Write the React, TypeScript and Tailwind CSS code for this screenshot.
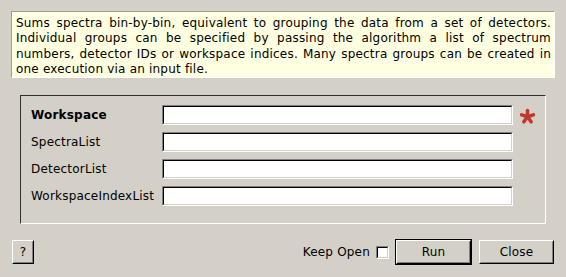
import React from "react";

const font = { fontFamily: '"DejaVu Sans", Verdana, sans-serif' };

function Sunken({ className = "", children }: { className?: string; children?: React.ReactNode }) {
  return (
    <div className={`border border-t-[#808080] border-l-[#808080] border-b-white border-r-white ${className}`}>
      <div className="h-full w-full border border-t-[#000000] border-l-[#000000] border-b-[#d4d0c8] border-r-[#d4d0c8] bg-white">
        {children}
      </div>
    </div>
  );
}

function Button({ label, isDefault = false, className = "" }: { label: string; isDefault?: boolean; className?: string }) {
  const inner = (
    <div className="h-full w-full border border-t-white border-l-white border-b-[#000000] border-r-[#000000]">
      <div className="flex h-full w-full items-center justify-center border border-t-[#d4d0c8] border-l-[#d4d0c8] border-b-[#808080] border-r-[#808080] text-[12px] tracking-[0.2px] text-black">
        {label}
      </div>
    </div>
  );
  if (isDefault) {
    return <div className={`border border-black ${className}`}>{inner}</div>;
  }
  return <div className={className}>{inner}</div>;
}

function Asterisk() {
  const angles = [-90, -18, 54, 126, 198];
  return (
    <svg width="17" height="17" viewBox="0 0 17 17" className="shrink-0">
      {angles.map((a) => {
        const r = (a * Math.PI) / 180;
        return (
          <line
            key={a}
            x1={8.5}
            y1={8.8}
            x2={8.5 + 6.2 * Math.cos(r)}
            y2={8.8 + 6.2 * Math.sin(r)}
            stroke="#c0392b"
            strokeWidth={3.6}
            strokeLinecap="round"
          />
        );
      })}
    </svg>
  );
}

const rows = [
  { label: "Workspace", bold: true, required: true },
  { label: "SpectraList" },
  { label: "DetectorList" },
  { label: "WorkspaceIndexList" },
];

export default function App() {
  return (
    <div className="flex h-[277px] w-[566px] flex-col bg-[#d4d0c8] px-[11px] pt-[11px] text-black" style={font}>
      {/* description */}
      <div className="h-[67px] w-[544px] border border-t-[#a09c94] border-l-[#a09c94] border-b-white border-r-white bg-[#ffffe1] pl-[4px] pr-[3px] pt-[4px]">
        <p className="text-justify text-[12px] leading-[15.3px] tracking-[0.2px]">
          Sums spectra bin-by-bin, equivalent to grouping the data from a set of detectors. Individual groups can be
          specified by passing the algorithm a list of spectrum numbers, detector IDs or workspace indices. Many spectra
          groups can be created in one execution via an input file.
        </p>
      </div>

      {/* properties */}
      <div className="ml-[9px] mt-[17px] h-[129px] w-[526px] border border-t-[#303030] border-l-[#303030] border-b-white border-r-white pb-[17px] pl-[10px] pt-[9px]">
        <div className="flex flex-col gap-[7px]">
          {rows.map((r) => (
            <div key={r.label} className="flex h-[20px] items-center">
              <div className={`w-[131px] text-[12px] tracking-[0.2px] ${r.bold ? "font-bold" : ""}`}>{r.label}</div>
              <Sunken className="h-[20px] w-[351px]" />
              {r.required && (
                <div className="ml-[6px] mt-[2px]">
                  <Asterisk />
                </div>
              )}
            </div>
          ))}
        </div>
      </div>

      {/* buttons */}
      <div className="mt-[15px] flex items-center pr-[1px]">
        <Button label="?" className="ml-[1px] h-[24px] w-[22px]" />
        <div className="ml-auto text-[12px] tracking-[0.2px]">Keep Open</div>
        <Sunken className="ml-[6px] h-[13px] w-[13px]" />
        <Button label="Run" isDefault className="ml-[6px] h-[26px] w-[77px]" />
        <Button label="Close" className="ml-[7px] h-[24px] w-[75px]" />
      </div>
    </div>
  );
}
